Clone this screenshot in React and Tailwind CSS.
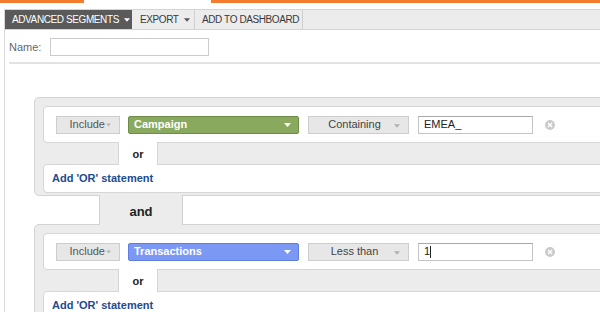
import React from 'react'

const Caret = ({ className }) => (
    <svg className={className} width="7" height="4" viewBox="0 0 7 4">
        <path d="M0 0h7L3.5 4z" fill="currentColor" />
    </svg>
)

function GrayButton({ label, width, centered }) {
    if (centered) {
        return (
            <div className={`relative flex items-center justify-center h-[18px] ${width} bg-[#e7e7e7] border border-[#cdcdcd] text-[11px] text-[#444]`}>
                <span className="pr-[8px]">{label}</span>
                <Caret className="absolute right-[8px] top-[7px] text-[#b0b0b0] w-[6px]" />
            </div>
        )
    }
    return (
        <div className={`flex items-center justify-end pr-[8px] h-[18px] ${width} bg-[#e7e7e7] border border-[#cdcdcd] text-[11px] text-[#555]`}>
            <span>{label}</span>
            <Caret className="ml-[1px] text-[#b5b5b5] w-[5px]" />
        </div>
    )
}

function ClearIcon() {
    return (
        <svg className="ml-[12px]" width="10" height="10" viewBox="0 0 10 10">
            <circle cx="5" cy="5" r="5" fill="#cbcbcb" />
            <path d="M3 3l4 4M7 3l-4 4" stroke="#fff" strokeWidth="1.4" />
        </svg>
    )
}

function SegmentBox({ dimension, dimColor, operator, value }) {
    return (
        <div className="w-[640px] bg-[#ececec] border border-[#d3d3d3] rounded-[5px] pt-[8px] pl-[8px] pb-[2px]">
            {/* Condition row */}
            <div className="relative z-0 flex items-center h-[37px] bg-white border border-[#d6d6d6] rounded-[4px] pl-[12px]">
                <GrayButton label="Include" width="w-[64px]" />
                <div className={`ml-[8px] flex items-center justify-between w-[171px] h-[18px] rounded-[2px] border pl-[5px] pr-[7px] text-[11px] font-bold text-white ${dimColor}`}>
                    <span>{dimension}</span>
                    <Caret className="text-white" />
                </div>
                <div className="ml-[9px]">
                    <GrayButton label={operator} width="w-[101px]" centered />
                </div>
                <div className="ml-[9px] flex items-center w-[115px] h-[18px] bg-white border border-[#c4c4c4] border-t-[#a9a9a9] pl-[5px] text-[11px] text-[#222]">
                    {value}
                </div>
                <ClearIcon />
            </div>

            {/* or */}
            <div className="flex h-[21px]">
                <div className="w-[75px]" />
                <div className="relative z-10 -my-px w-[40px] bg-white border-x border-[#d6d6d6] flex items-center justify-center pt-[2px] text-[11px] font-bold text-[#222]">
                    or
                </div>
            </div>

            {/* Add OR */}
            <div className="flex items-center h-[29px] bg-white border border-[#d6d6d6] rounded-[4px] pl-[8px] text-[11px] font-bold text-[#1d4b8f]">
                Add 'OR' statement
            </div>
        </div>
    )
}

export default function App() {
    return (
        <div className="w-[600px] h-[312px] overflow-hidden bg-white font-['Liberation_Sans',Arial,sans-serif]">
            {/* Orange strip */}
            <div className="flex h-[3px]">
                <div className="w-[84px] bg-[#f57b2f]" />
                <div className="w-[127px]" />
                <div className="flex-1 bg-[#f57b2f]" />
            </div>

            <div className="mt-[6px] ml-[4px] h-[303px] border-l border-[#d7d7d7]">
                {/* Toolbar */}
                <div className="flex h-[21px] bg-[#ececec] border-y border-[#d4d4d4] text-[10px] tracking-[-0.4px] uppercase">
                    <div className="flex items-center w-[127px] pl-[7px] bg-[#5a5a5a] text-white">
                        <span>Advanced Segments</span>
                        <Caret className="ml-[5px] text-white w-[6px]" />
                    </div>
                    <div className="flex items-center w-[63px] pl-[8px] border-r border-[#d0d0d0] text-[#3a3a3a]">
                        <span>Export</span>
                        <Caret className="ml-[5px] text-[#555] w-[6px]" />
                    </div>
                    <div className="flex items-center w-[108px] pl-[7px] border-r border-[#d0d0d0] text-[#3a3a3a]">
                        Add to Dashboard
                    </div>
                </div>

                {/* Name */}
                <div className="flex items-center mt-[8px] pl-[4px] h-[18px]">
                    <span className="text-[11px] text-[#666]">Name:</span>
                    <div className="ml-[9px] w-[159px] h-[18px] border border-[#cbcbcb]" />
                </div>
                <div className="mt-[6px] ml-[4px] h-[2px] bg-[#e2e2e2]" />

                {/* Segments */}
                <div className="mt-[33px] ml-[29px]">
                    <SegmentBox
                        dimension="Campaign"
                        dimColor="bg-[#88a95e] border-[#6e8c48]"
                        operator="Containing"
                        value="EMEA_"
                    />

                    {/* and */}
                    <div className="flex h-[28px]">
                        <div className="w-[65px]" />
                        <div className="relative z-10 -my-px w-[84px] bg-[#ececec] border-x border-[#d3d3d3] flex items-center justify-center pt-[4px] text-[13px] font-bold text-[#222]">
                            and
                        </div>
                    </div>

                    <SegmentBox
                        dimension="Transactions"
                        dimColor="bg-[#7c98f5] border-[#5e7ddf]"
                        operator="Less than"
                        value={<span className="flex items-center">1<span className="w-px h-[12px] bg-[#222]" /></span>}
                    />
                </div>
            </div>
        </div>
    )
}
